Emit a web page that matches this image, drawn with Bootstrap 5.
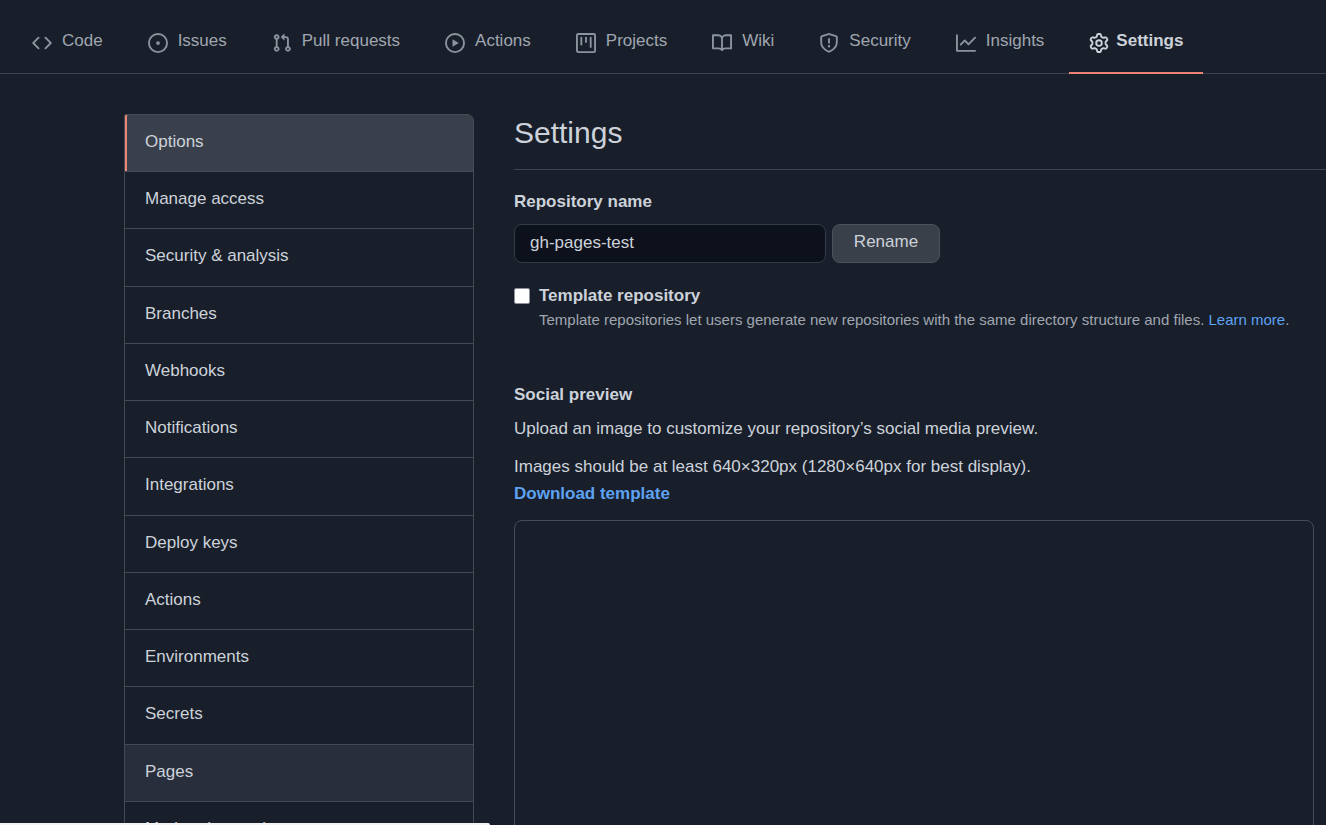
<!DOCTYPE html>
<html lang="en">
<head>
<meta charset="utf-8">
<meta name="viewport" content="width=device-width, initial-scale=1">
<title>Settings · gh-pages-test</title>
<link rel="stylesheet" href="https://cdn.jsdelivr.net/npm/bootstrap@5.3.0/dist/css/bootstrap.min.css">
<style>
:root {
  --page: #181f2a;
  --line: #3c434d;
  --text: #cdd2da;
  --muted: #a0a6b0;
  --accent: #ee8474;
  --blue: #5ea2f2;
}
body {
  background: var(--page);
  color: var(--text);
  font-family: "Liberation Sans", Arial, sans-serif;
  font-size: 17px;
  line-height: 27px;
}
a { color: var(--blue); text-decoration: none; }
.repo-tabs { border-bottom: 1px solid var(--line); padding-left: 12px; gap: 5px; }
.repo-tabs .nav-link {
  color: var(--muted);
  padding: 27px 20px 17px;
  line-height: 28px;
  border-bottom: 2px solid transparent;
  margin-bottom: -1px;
  gap: 10px;
}
.repo-tabs .nav-link.active { color: var(--text); border-color: var(--accent); font-weight: 700; gap: 7px; }
.repo-tabs svg { width: 20px; height: 20px; fill: #8b949e; flex: none; margin-top: 3px; }
.repo-tabs .active svg { fill: var(--text); }
.layout { padding: 40px 0 0 124px; gap: 40px; }
.side-menu {
  width: 350px;
  min-height: 745px;
  flex: none;
  --bs-list-group-bg: transparent;
  --bs-list-group-color: var(--text);
  --bs-list-group-border-color: #424a54;
  --bs-list-group-border-radius: 7px;
}
.side-menu .list-group-item { flex: 1 0 auto; padding: 13px 20px 15px; }
.side-menu .list-group-item.active {
  background: #3a404b; color: var(--text); border-color: #454c56;
  border-top-left-radius: 2px;
  box-shadow: inset 2px 0 var(--accent);
}
.side-menu .hovered { background: #282e3b; }
.page-title { font-size: 30px; line-height: 38px; padding-bottom: 17px; border-bottom: 1px solid var(--line); margin-bottom: 18px; }
.name-label { margin-bottom: 9px; }
.name-row { gap: 6px; margin-bottom: 20px; }
.name-row .form-control {
  width: 312px; height: 39px; padding: 4px 15px 6px;
  background: #0d111b; border: 1px solid #343b46; border-radius: 8px;
  color: var(--text); font-size: inherit;
}
.name-row .btn {
  width: 108px; height: 39px; padding: 3px 15px 6px;
  background: #394049; border: 1px solid #4b525c; border-radius: 8px;
  color: var(--text); font-size: inherit;
}
.tick { width: 16px; height: 16px; margin: 5px 9px 0 0; flex: none; appearance: none; background: #fff; border: 1px solid #8f8f9d; border-radius: 2px; }
.note-label { line-height: 26px; }
.note { font-size: 15px; line-height: 22px; color: var(--muted); }
.preview { margin-top: 50px; }
.preview h2 { font-size: 17px; line-height: 27px; margin-bottom: 7px; }
.preview p { margin-bottom: 11px; }
.drop-box { max-width: 800px; height: 400px; border: 1px solid #464c57; border-radius: 8px; margin: 13px 12px 0 0; }
.status-bar { width: 490px; height: 2px; background: #f4f4f5; border-top-right-radius: 4px; }
</style>
</head>
<body class="vh-100 overflow-hidden">
<nav class="repo-tabs nav flex-nowrap text-nowrap" aria-label="Repository">
  <a class="nav-link d-flex align-items-center" href="#"><svg viewBox="0 0 16 16"><path d="M4.72 3.22a.75.75 0 011.06 1.06L2.06 8l3.72 3.72a.75.75 0 11-1.06 1.06L.47 8.53a.75.75 0 010-1.06l4.25-4.25zm6.56 0a.75.75 0 10-1.06 1.06L13.94 8l-3.72 3.72a.75.75 0 101.06 1.06l4.25-4.25a.75.75 0 000-1.06l-4.25-4.25z"/></svg>Code</a>
  <a class="nav-link d-flex align-items-center" href="#"><svg viewBox="0 0 16 16"><path d="M8 9.5a1.5 1.5 0 100-3 1.5 1.5 0 000 3z"/><path fill-rule="evenodd" d="M8 0a8 8 0 100 16A8 8 0 008 0zM1.5 8a6.5 6.5 0 1113 0 6.5 6.5 0 01-13 0z"/></svg>Issues</a>
  <a class="nav-link d-flex align-items-center" href="#"><svg viewBox="0 0 16 16"><path fill-rule="evenodd" d="M7.177 3.073L9.573.677A.25.25 0 0110 .854v4.792a.25.25 0 01-.427.177L7.177 3.427a.25.25 0 010-.354zM3.75 2.5a.75.75 0 100 1.5.75.75 0 000-1.5zm-2.25.75a2.25 2.25 0 113 2.122v5.256a2.251 2.251 0 11-1.5 0V5.372A2.25 2.25 0 011.5 3.25zM11 2.5h-1V4h1a1 1 0 011 1v5.628a2.251 2.251 0 101.5 0V5A2.5 2.5 0 0011 2.5zm1 10.25a.75.75 0 111.5 0 .75.75 0 01-1.5 0zM3.75 12a.75.75 0 100 1.5.75.75 0 000-1.5z"/></svg>Pull requests</a>
  <a class="nav-link d-flex align-items-center" href="#"><svg viewBox="0 0 16 16"><path fill-rule="evenodd" d="M1.5 8a6.5 6.5 0 1113 0 6.5 6.5 0 01-13 0zM8 0a8 8 0 100 16A8 8 0 008 0zM6.379 5.227A.25.25 0 006 5.442v5.117a.25.25 0 00.379.214l4.264-2.559a.25.25 0 000-.428L6.379 5.227z"/></svg>Actions</a>
  <a class="nav-link d-flex align-items-center" href="#"><svg viewBox="0 0 16 16"><path fill-rule="evenodd" d="M1.75 0A1.75 1.75 0 000 1.75v12.5C0 15.216.784 16 1.75 16h12.5A1.75 1.75 0 0016 14.25V1.75A1.75 1.75 0 0014.25 0H1.75zM1.5 1.75a.25.25 0 01.25-.25h12.5a.25.25 0 01.25.25v12.5a.25.25 0 01-.25.25H1.75a.25.25 0 01-.25-.25V1.75zM11.75 3a.75.75 0 00-.75.75v7.5a.75.75 0 001.5 0v-7.5a.75.75 0 00-.75-.75zm-8.25.75a.75.75 0 011.5 0v5.5a.75.75 0 01-1.5 0v-5.5zM8 3a.75.75 0 00-.75.75v3.5a.75.75 0 001.5 0v-3.5A.75.75 0 008 3z"/></svg>Projects</a>
  <a class="nav-link d-flex align-items-center" href="#"><svg viewBox="0 0 16 16"><path fill-rule="evenodd" d="M0 1.75A.75.75 0 01.75 1h4.253c1.227 0 2.317.59 3 1.501A3.744 3.744 0 0111.006 1h4.245a.75.75 0 01.75.75v10.5a.75.75 0 01-.75.75h-4.507a2.25 2.25 0 00-1.591.659l-.622.621a.75.75 0 01-1.06 0l-.622-.621A2.25 2.25 0 005.258 13H.75a.75.75 0 01-.75-.75V1.75zm8.755 3a2.25 2.25 0 012.25-2.25H14.5v9h-3.757c-.71 0-1.4.201-1.992.572l.004-7.322zm-1.504 7.324l.004-5.073-.002-2.253A2.25 2.25 0 005.003 2.5H1.5v9h3.757a3.75 3.75 0 011.994.574z"/></svg>Wiki</a>
  <a class="nav-link d-flex align-items-center" href="#"><svg viewBox="0 0 16 16"><path fill-rule="evenodd" d="M7.467.133a1.75 1.75 0 011.066 0l5.25 1.68A1.75 1.75 0 0115 3.48V7c0 1.566-.32 3.182-1.303 4.682-.983 1.498-2.585 2.813-5.032 3.855a1.7 1.7 0 01-1.33 0c-2.447-1.042-4.049-2.357-5.032-3.855C1.32 10.182 1 8.566 1 7V3.48a1.75 1.75 0 011.217-1.667l5.25-1.68zm.61 1.429a.25.25 0 00-.153 0l-5.25 1.68a.25.25 0 00-.174.238V7c0 1.358.275 2.666 1.057 3.86.784 1.194 2.121 2.34 4.366 3.297a.2.2 0 00.154 0c2.245-.956 3.582-2.104 4.366-3.298C13.225 9.666 13.5 8.36 13.5 7V3.48a.25.25 0 00-.174-.237l-5.25-1.68zM9 10.5a1 1 0 11-2 0 1 1 0 012 0zm-.25-5.75a.75.75 0 10-1.5 0v3a.75.75 0 001.5 0v-3z"/></svg>Security</a>
  <a class="nav-link d-flex align-items-center" href="#"><svg viewBox="0 0 16 16"><path fill-rule="evenodd" d="M1.5 1.75a.75.75 0 00-1.5 0v12.5c0 .414.336.75.75.75h14.5a.75.75 0 000-1.5H1.5V1.75zm14.28 2.53a.75.75 0 00-1.06-1.06L10 7.94 7.53 5.47a.75.75 0 00-1.06 0L3.22 8.72a.75.75 0 001.06 1.06L7 7.06l2.47 2.47a.75.75 0 001.06 0l5.25-5.25z"/></svg>Insights</a>
  <a class="nav-link d-flex align-items-center active" aria-current="page" href="#"><svg viewBox="0 0 16 16"><path fill-rule="evenodd" d="M7.429 1.525a6.593 6.593 0 011.142 0c.036.003.108.036.137.146l.289 1.105c.147.56.55.967.997 1.189.174.086.341.183.501.29.417.278.97.423 1.53.27l1.102-.303c.11-.03.175.016.195.046.219.31.41.641.573.989.014.031.022.11-.059.19l-.815.806c-.411.406-.562.957-.53 1.456a4.588 4.588 0 010 .582c-.032.499.119 1.05.53 1.456l.815.806c.08.08.073.159.059.19a6.494 6.494 0 01-.573.99c-.02.029-.086.074-.195.045l-1.103-.303c-.559-.153-1.112-.008-1.529.27-.16.107-.327.204-.5.29-.449.222-.851.628-.998 1.189l-.289 1.105c-.029.11-.101.143-.137.146a6.613 6.613 0 01-1.142 0c-.036-.003-.108-.037-.137-.146l-.289-1.105c-.147-.56-.55-.967-.997-1.189a4.502 4.502 0 01-.501-.29c-.417-.278-.97-.423-1.53-.27l-1.102.303c-.11.03-.175-.016-.195-.046a6.492 6.492 0 01-.573-.989c-.014-.031-.022-.11.059-.19l.815-.806c.411-.406.562-.957.53-1.456a4.587 4.587 0 010-.582c.032-.499-.119-1.05-.53-1.456l-.815-.806c-.08-.08-.073-.159-.059-.19a6.44 6.44 0 01.573-.99c.02-.029.086-.075.195-.045l1.103.303c.559.153 1.112.008 1.529-.27.16-.107.327-.204.5-.29.449-.222.851-.628.998-1.189l.289-1.105c.029-.11.101-.143.137-.146zM8 0c-.236 0-.47.01-.701.03-.743.065-1.29.615-1.458 1.261l-.29 1.106c-.017.066-.078.158-.211.224a5.994 5.994 0 00-.668.386c-.123.082-.233.09-.3.071L3.27 2.776c-.644-.177-1.392.02-1.82.63a7.977 7.977 0 00-.704 1.217c-.315.675-.111 1.422.363 1.891l.815.806c.05.048.098.147.088.294a6.084 6.084 0 000 .772c.01.147-.038.246-.088.294l-.815.806c-.474.469-.678 1.216-.363 1.891.2.428.436.835.704 1.218.428.609 1.176.806 1.82.63l1.103-.303c.066-.019.176-.011.299.071.213.143.436.272.668.386.133.066.194.158.212.224l.289 1.106c.169.646.715 1.196 1.458 1.26a8.094 8.094 0 001.402 0c.743-.064 1.29-.614 1.458-1.26l.29-1.106c.017-.066.078-.158.211-.224a5.98 5.98 0 00.668-.386c.123-.082.233-.09.3-.071l1.102.302c.644.177 1.392-.02 1.82-.63.268-.382.505-.789.704-1.217.315-.675.111-1.422-.364-1.891l-.814-.806c-.05-.048-.098-.147-.088-.294a6.1 6.1 0 000-.772c-.01-.147.039-.246.088-.294l.814-.806c.475-.469.679-1.216.364-1.891a7.992 7.992 0 00-.704-1.218c-.428-.609-1.176-.806-1.82-.63l-1.103.303c-.066.019-.176.011-.299-.071a5.991 5.991 0 00-.668-.386c-.133-.066-.194-.158-.212-.224L10.16 1.29C9.99.645 9.444.095 8.701.031A8.094 8.094 0 008 0zm1.5 8a1.5 1.5 0 11-3 0 1.5 1.5 0 013 0zM11 8a3 3 0 11-6 0 3 3 0 016 0z"/></svg>Settings</a>
</nav>
<div class="layout d-flex align-items-start">
  <nav class="side-menu list-group" aria-label="Settings sections">
    <a class="list-group-item active" aria-current="true" href="#">Options</a>
    <a class="list-group-item" href="#">Manage access</a>
    <a class="list-group-item" href="#">Security &amp; analysis</a>
    <a class="list-group-item" href="#">Branches</a>
    <a class="list-group-item" href="#">Webhooks</a>
    <a class="list-group-item" href="#">Notifications</a>
    <a class="list-group-item" href="#">Integrations</a>
    <a class="list-group-item" href="#">Deploy keys</a>
    <a class="list-group-item" href="#">Actions</a>
    <a class="list-group-item" href="#">Environments</a>
    <a class="list-group-item" href="#">Secrets</a>
    <a class="list-group-item hovered" href="#">Pages</a>
    <a class="list-group-item" href="#">Moderation settings</a>
  </nav>
  <main class="flex-grow-1">
    <h1 class="page-title fw-normal">Settings</h1>
    <form>
      <label class="name-label d-block fw-bold" for="repo-name">Repository name</label>
      <div class="name-row d-flex">
        <input class="form-control" id="repo-name" type="text" value="gh-pages-test">
        <button class="btn" type="button">Rename</button>
      </div>
      <div class="d-flex">
        <input class="tick" id="template" type="checkbox">
        <div>
          <label class="note-label d-block fw-bold" for="template">Template repository</label>
          <div class="note">Template repositories let users generate new repositories with the same directory structure and files. <a href="#">Learn more</a>.</div>
        </div>
      </div>
    </form>
    <section class="preview">
      <h2 class="fw-bold">Social preview</h2>
      <p>Upload an image to customize your repository’s social media preview.</p>
      <p class="mb-0">Images should be at least 640×320px (1280×640px for best display).<br><a class="fw-bold" href="#">Download template</a></p>
      <div class="drop-box"></div>
    </section>
  </main>
</div>
<div class="status-bar fixed-bottom"></div>
<script src="https://cdn.jsdelivr.net/npm/bootstrap@5.3.0/dist/js/bootstrap.bundle.min.js"></script>
</body>
</html>
